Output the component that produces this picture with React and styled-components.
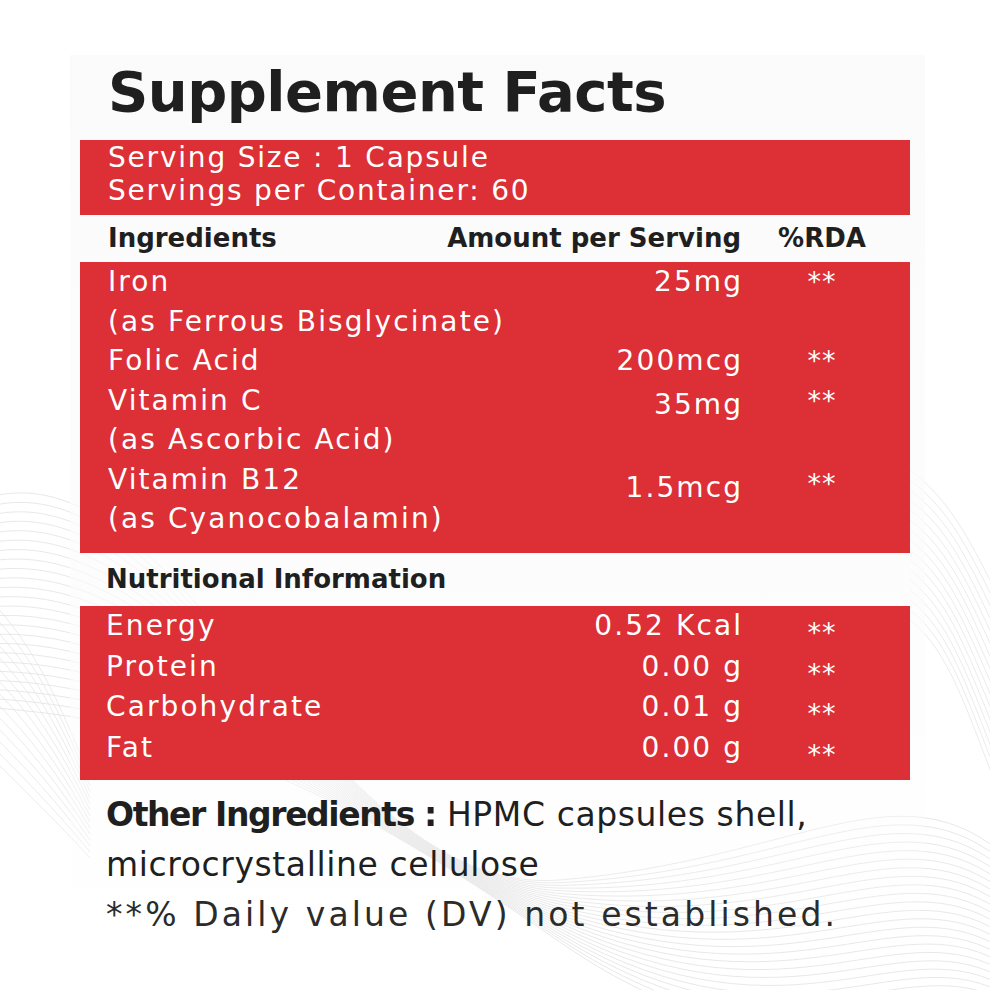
import React from 'react'
import styled, { createGlobalStyle } from 'styled-components'

const red = '#dc2f36'
const ink = '#1f1f1f'

const GlobalStyle = createGlobalStyle`
  html, body {
    margin: 0;
    padding: 0;
    background: #fff;
  }
  body {
    font-family: "DejaVu Sans", "Liberation Sans", sans-serif;
  }
`

const Page = styled.div`
  position: relative;
  width: 990px;
  height: 990px;
  overflow: hidden;
  background: #fff;
`

const Waves = styled.svg`
  position: absolute;
  inset: 0;
  width: 990px;
  height: 990px;
  pointer-events: none;
`

const Sheet = styled.main`
  position: relative;
  z-index: 1;
  margin: 55px 0 0 70px;
  padding: 0 0 0 10px;
  width: 845px;
  background: linear-gradient(to bottom, rgba(250, 250, 250, 0.9), rgba(252, 252, 252, 0.6) 75%, rgba(255, 255, 255, 0));
`

const Title = styled.h1`
  margin: 0;
  height: 85px;
  padding-left: 28px;
  font-size: 56px;
  line-height: 74px;
  font-weight: 700;
  color: ${ink};
  letter-spacing: -0.5px;
`

const Band = styled.section`
  width: 830px;
  box-sizing: border-box;
  background: ${(p) => (p.$light ? 'transparent' : red)};
  color: ${(p) => (p.$light ? ink : '#fff')};
  height: ${(p) => p.$h}px;
  padding: ${(p) => p.$pad || '0'};
`

const ServingLine = styled.div`
  font-size: 28px;
  line-height: 33px;
  padding-left: 28px;
  letter-spacing: 1.8px;
`

const Row = styled.div`
  display: grid;
  grid-template-columns: minmax(0, 1fr) 320px 162px;
  padding: 0 7px 0 ${(p) => p.$inset || 28}px;
  font-size: ${(p) => p.$size || 28}px;
  line-height: ${(p) => p.$lh || 39.5}px;
  font-weight: ${(p) => (p.$bold ? 700 : 400)};
  letter-spacing: ${(p) => (p.$bold ? '0' : '2.1px')};
`

const Name = styled.div`
  white-space: nowrap;
`

const Amount = styled.div`
  text-align: right;
  white-space: nowrap;
  padding-top: ${(p) => p.$drop || 0}px;
  margin-right: ${(p) => (p.$bold ? 0 : -2.1)}px;
`

const Rda = styled.div`
  text-align: center;
  white-space: nowrap;
  padding-top: ${(p) => p.$drop || 0}px;
`

const Stars = styled.span`
  display: inline-block;
  font-size: 27px;
  line-height: 1;
  letter-spacing: 1px;
  vertical-align: ${(p) => p.$shift || 0}px;
`

const Footer = styled.div`
  padding: 10px 0 0 26px;
  color: ${ink};
  font-size: 33px;
  line-height: 50px;
  letter-spacing: 0.6px;
`

const Strong = styled.strong`
  font-weight: 700;
  letter-spacing: -1.4px;
`

const Note = styled.div`
  color: #2b2b2b;
  letter-spacing: 3.1px;
`

const ingredients = [
  { name: ['Iron', '(as Ferrous Bisglycinate)'], amount: '25mg' },
  { name: ['Folic Acid'], amount: '200mcg' },
  { name: ['Vitamin C', '(as Ascorbic Acid)'], amount: '35mg', drop: 4 },
  { name: ['Vitamin B12', '(as Cyanocobalamin)'], amount: '1.5mcg', drop: 8 },
]

const nutrition = [
  { name: 'Energy', amount: '0.52 Kcal' },
  { name: 'Protein', amount: '0.00 g' },
  { name: 'Carbohydrate', amount: '0.01 g' },
  { name: 'Fat', amount: '0.00 g' },
]

const wavePaths = Array.from({ length: 24 }, (_, i) => {
  const o = i * 9
  return `M-20 ${500 + o} C 180 ${430 + o * 1.4}, 320 ${900 - o * 0.6}, 560 ${880 + o * 0.3} S 900 ${760 + o}, 1010 ${860 + o * 0.8}`
})

const leftPaths = Array.from({ length: 14 }, (_, i) => {
  const o = i * 12
  return `M-10 ${600 + o} C 30 ${640 + o}, 60 ${700 + o * 0.8}, 90 ${780 + o * 0.5}`
})

const rightPaths = Array.from({ length: 16 }, (_, i) => {
  const o = i * 10
  return `M910 ${470 + o} C 950 ${500 + o}, 970 ${540 + o * 1.2}, 1000 ${600 + o * 1.3}`
})

const App = () => (
  <Page>
    <GlobalStyle />
    <Waves viewBox="0 0 990 990">
      <g fill="none" stroke="#e2e2e2" strokeWidth="1">
        {wavePaths.map((d, i) => <path key={i} d={d} opacity={0.8} />)}
        {leftPaths.map((d, i) => <path key={'l' + i} d={d} opacity={0.7} />)}
        {rightPaths.map((d, i) => <path key={'r' + i} d={d} opacity={0.7} />)}
      </g>
    </Waves>
    <Sheet>
      <Title>Supplement Facts</Title>
      <Band $h={75} $pad="1px 0 0">
        <ServingLine>Serving Size : 1 Capsule</ServingLine>
        <ServingLine>Servings per Container: 60</ServingLine>
      </Band>
      <Band $light $h={47}>
        <Row $bold $size={26} $lh={47}>
          <Name>Ingredients</Name>
          <Amount $bold>Amount per Serving</Amount>
          <Rda>%RDA</Rda>
        </Row>
      </Band>
      <Band $h={291}>
        {ingredients.map((item) => (
          <Row key={item.amount}>
            <Name>
              {item.name.map((line) => <div key={line}>{line}</div>)}
            </Name>
            <Amount $drop={item.drop}>{item.amount}</Amount>
            <Rda $drop={item.drop ? item.drop - 4 : 0}><Stars>**</Stars></Rda>
          </Row>
        ))}
      </Band>
      <Band $light $h={53}>
        <Row $bold $size={26} $lh={53} $inset={26}>
          <Name>Nutritional Information</Name>
        </Row>
      </Band>
      <Band $h={174}>
        {nutrition.map((item) => (
          <Row key={item.name} $lh={40.7} $inset={26}>
            <Name>{item.name}</Name>
            <Amount>{item.amount}</Amount>
            <Rda><Stars $shift={-7}>**</Stars></Rda>
          </Row>
        ))}
      </Band>
      <Footer>
        <div><Strong>Other Ingredients :</Strong> HPMC capsules shell,</div>
        <div>microcrystalline cellulose</div>
        <Note>**% Daily value (DV) not established.</Note>
      </Footer>
    </Sheet>
  </Page>
)

export default App
